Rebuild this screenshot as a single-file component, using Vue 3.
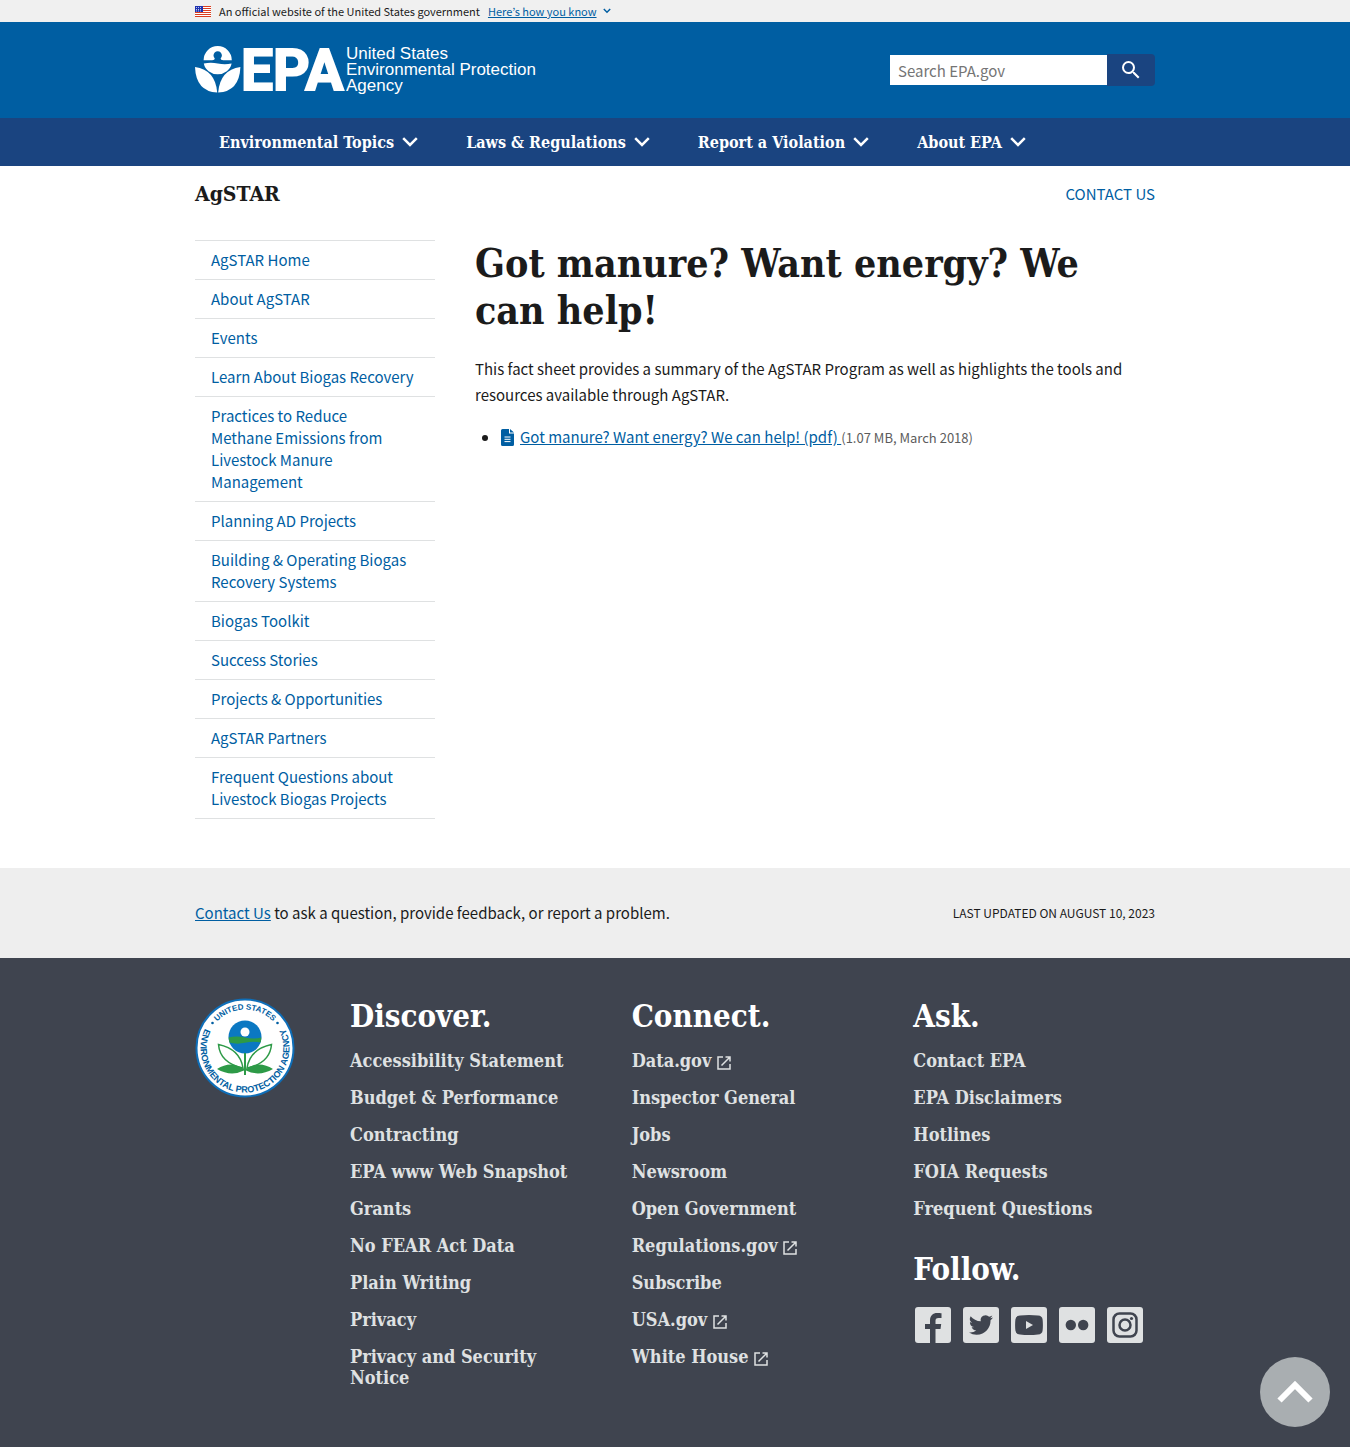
<script setup>
const topics = ['Environmental Topics', 'Laws & Regulations', 'Report a Violation', 'About EPA']

const sideLinks = [
  'AgSTAR Home',
  'About AgSTAR',
  'Events',
  'Learn About Biogas Recovery',
  'Practices to Reduce\nMethane Emissions from\nLivestock Manure\nManagement',
  'Planning AD Projects',
  'Building & Operating Biogas Recovery Systems',
  'Biogas Toolkit',
  'Success Stories',
  'Projects & Opportunities',
  'AgSTAR Partners',
  'Frequent Questions about Livestock Biogas Projects',
]

const discover = [
  'Accessibility Statement',
  'Budget & Performance',
  'Contracting',
  'EPA www Web Snapshot',
  'Grants',
  'No FEAR Act Data',
  'Plain Writing',
  'Privacy',
  'Privacy and Security Notice',
]

const connect = [
  { label: 'Data.gov', external: true },
  { label: 'Inspector General' },
  { label: 'Jobs' },
  { label: 'Newsroom' },
  { label: 'Open Government' },
  { label: 'Regulations.gov', external: true },
  { label: 'Subscribe' },
  { label: 'USA.gov', external: true },
  { label: 'White House', external: true },
]

const ask = ['Contact EPA', 'EPA Disclaimers', 'Hotlines', 'FOIA Requests', 'Frequent Questions']
</script>

<template>
  <div class="page">
    <section class="banner" aria-label="Official government website">
      <div class="container banner-inner">
        <svg class="flag" viewBox="0 0 16 11" aria-hidden="true">
          <rect width="16" height="11" fill="#fff" />
          <path d="M0 .5h16M0 2.5h16M0 4.5h16M0 6.5h16M0 8.5h16M0 10.5h16" stroke="#db3e1f" />
          <rect width="8" height="6" fill="#1e33b1" />
          <path d="M1 1.5h6M1 3.5h6M1 5h6" stroke="#fff" stroke-width=".7" stroke-dasharray="1 1" />
        </svg>
        <span>An official website of the United States government</span>
        <button type="button" class="banner-button">
          <span>Here’s how you know</span>
          <svg viewBox="0 0 8 6" aria-hidden="true"><path d="M.8 1 4 4.2 7.2 1" /></svg>
        </button>
      </div>
    </section>

    <header class="header">
      <div class="container header-inner">
        <a href="#" class="logo" aria-label="US EPA home">
          <svg viewBox="0 0 350 48" role="img">
            <g fill="#fff">
              <path d="M8.6 14.2a14.1 14.1 0 0 1 28.2 0h-8.600q-2.600-.3-2.600-1.800a4.200 4.200 0 1 0-5.800 0q0 1.500-2.600 1.800z" />
              <path d="M8.800 17.500q7-1.500 14 0t13.800 0a14.100 13 0 0 1-27.800 0z" />
              <path d="M0 21q20.500 3 22.200 25.500Q1 45.500 0 21z" />
              <path d="M45.400 21q-20.500 3-22.200 25.500Q44.400 45.500 45.400 21z" />
            </g>
            <text class="logo-mark" x="46" y="44">EPA</text>
            <text class="logo-name" x="151" y="13">United States</text>
            <text class="logo-name" x="151" y="29">Environmental Protection</text>
            <text class="logo-name" x="151" y="45">Agency</text>
          </svg>
        </a>
        <form class="search" role="search" @submit.prevent>
          <input type="search" aria-label="Search EPA.gov" placeholder="Search EPA.gov" />
          <button type="submit" aria-label="Search">
            <svg viewBox="0 0 24 24" aria-hidden="true">
              <path d="M15.500 14h-.79l-.28-.27A6.471 6.471 0 0 0 16 9.500 6.500 6.500 0 1 0 9.500 16c1.610 0 3.090-.59 4.230-1.570l.27.28v.79l5 4.990L20.490 19l-4.990-5zm-6 0C7.010 14 5 11.990 5 9.500S7.010 5 9.500 5 14 7.010 14 9.500 11.990 14 9.500 14z" />
            </svg>
          </button>
        </form>
      </div>
    </header>

    <nav class="topnav" aria-label="Primary">
      <div class="container topnav-inner">
        <button v-for="topic in topics" :key="topic" type="button">
          <span>{{ topic }}</span>
          <svg viewBox="0 0 16 10" aria-hidden="true"><path d="M1.200 1.200 8 8l6.800-6.800" /></svg>
        </button>
      </div>
    </nav>

    <div class="container body">
      <div class="section-head">
        <h2>AgSTAR</h2>
        <a href="#">CONTACT US</a>
      </div>
      <div class="columns">
        <nav class="sidenav" aria-label="AgSTAR">
          <ul>
            <li v-for="link in sideLinks" :key="link"><a href="#">{{ link }}</a></li>
          </ul>
        </nav>
        <main class="content">
          <h1>Got manure? Want energy? We can help!</h1>
          <p>
            This fact sheet provides a summary of the AgSTAR Program as well as highlights the tools and
            resources available through AgSTAR.
          </p>
          <ul>
            <li>
              <svg class="file" viewBox="0 0 13 17" aria-hidden="true">
                <path d="M1.500 0H8v4.500h5v11a1.500 1.500 0 0 1-1.500 1.500h-10A1.500 1.500 0 0 1 0 15.500v-14A1.500 1.500 0 0 1 1.500 0z" fill="#005ea2" />
                <path d="M9 0v3.500h4z" fill="#005ea2" />
                <path d="M3.500 8h6M3.500 10.300h6M3.500 12.600h6" stroke="#fff" />
              </svg>
              <a href="#">Got manure? Want energy? We can help! (pdf) </a><span class="meta">(1.07 MB, March 2018)</span>
            </li>
          </ul>
        </main>
      </div>
    </div>

    <section class="prefooter">
      <div class="container prefooter-inner">
        <p><a href="#">Contact Us</a> to ask a question, provide feedback, or report a problem.</p>
        <p class="updated">LAST UPDATED ON AUGUST 10, 2023</p>
      </div>
    </section>

    <footer class="footer">
      <div class="container footer-inner">
        <svg class="seal" viewBox="0 0 100 100" role="img" aria-label="EPA seal">
          <defs>
            <path id="seal-top" d="M11.500 50a38.500 38.500 0 0 1 77 0" />
            <path id="seal-bottom" d="M15.500 22A44.500 44.500 0 1 0 84.500 22" />
          </defs>
          <circle cx="50" cy="50" r="48.500" fill="#fff" stroke="#0e6eb8" stroke-width="2" />
          <text class="seal-small"><textPath href="#seal-top" startOffset="50%">UNITED STATES</textPath></text>
          <text><textPath href="#seal-bottom" startOffset="50%">ENVIRONMENTAL PROTECTION AGENCY</textPath></text>
          <circle cx="17.500" cy="25" r="1.300" fill="#005ea2" />
          <circle cx="82.500" cy="25" r="1.300" fill="#005ea2" />
          <circle cx="50" cy="39" r="16.500" fill="#0b78c2" />
          <path d="M33.600 39.500q8-2 16.400 0t16.400 0l-.7 5q-7.700-1.500-15.700.3t-15.700-.3z" fill="#2d9a47" />
          <circle cx="50" cy="34" r="4.500" fill="#fff" />
          <g fill="#fff" stroke="#2d9a47" stroke-width="1.500">
            <path d="M48 70Q25 65 23.500 46.500 45 51 48 70z" />
            <path d="M52 70Q75 65 76.500 46.500 55 51 52 70z" />
          </g>
          <path d="M22 71q14-9 27 0v-16h2v16q13-9 27 0-14 8-27 1.500V77h-2v-4.500Q36 79 22 71z" fill="#2d9a47" />
        </svg>

        <div class="footer-columns">
          <section>
            <h2>Discover.</h2>
            <ul>
              <li v-for="link in discover" :key="link"><a href="#">{{ link }}</a></li>
            </ul>
          </section>
          <section>
            <h2>Connect.</h2>
            <ul>
              <li v-for="link in connect" :key="link.label">
                <a href="#">{{ link.label }}
                  <svg v-if="link.external" class="external" viewBox="0 0 14 14" aria-hidden="true">
                    <path d="M6 1H1v12h12V8M8.500 1H13v4.500M13 1 4.500 9.500" />
                  </svg>
                </a>
              </li>
            </ul>
          </section>
          <section>
            <h2>Ask.</h2>
            <ul>
              <li v-for="link in ask" :key="link"><a href="#">{{ link }}</a></li>
            </ul>
            <h2 class="follow">Follow.</h2>
            <div class="social">
              <a href="#" aria-label="Facebook">
                <svg viewBox="0 0 36 36">
                  <rect width="36" height="36" rx="3" />
                  <path class="ink" d="M15 36V22h-5v-5h5v-3.500C15 8.500 18 6 22.200 6c1.800 0 3.600.2 4.300.3v4.600h-3c-2.300 0-3 1.100-3 2.800V17h5.700l-.7 5h-5v14z" />
                </svg>
              </a>
              <a href="#" aria-label="Twitter">
                <svg viewBox="0 0 36 36">
                  <rect width="36" height="36" rx="3" />
                  <path class="ink" transform="translate(6 6)" d="M23.950 4.570a10 10 0 0 1-2.820.77 4.960 4.960 0 0 0 2.160-2.720c-.95.550-2 .95-3.130 1.180a4.920 4.920 0 0 0-8.380 4.480C7.690 8.090 4.070 6.130 1.640 3.160a4.930 4.930 0 0 0 1.520 6.570 4.900 4.900 0 0 1-2.230-.61v.06a4.930 4.930 0 0 0 3.950 4.830 5 5 0 0 1-2.210.08 4.940 4.940 0 0 0 4.600 3.420A9.870 9.870 0 0 1 0 19.540a13.990 13.990 0 0 0 7.550 2.210c9.050 0 14-7.500 14-13.980 0-.21 0-.42-.02-.63a9.940 9.940 0 0 0 2.460-2.550z" />
                </svg>
              </a>
              <a href="#" aria-label="YouTube">
                <svg viewBox="0 0 36 36">
                  <rect width="36" height="36" rx="3" />
                  <path class="ink" d="M9 8.500Q18 7.500 27 8.500q4.200.3 4.600 4 .6 5.500 0 11-.4 3.700-4.600 4-9 1-18 0-4.200-.3-4.600-4-.6-5.500 0-11 .4-3.700 4.600-4z" />
                  <path d="m15 14 7 4-7 4z" />
                </svg>
              </a>
              <a href="#" aria-label="Flickr">
                <svg viewBox="0 0 36 36">
                  <rect width="36" height="36" rx="3" />
                  <circle class="ink" cx="11.800" cy="18" r="5.200" />
                  <circle class="ink" cx="24.200" cy="18" r="5.200" />
                </svg>
              </a>
              <a href="#" aria-label="Instagram">
                <svg viewBox="0 0 36 36">
                  <rect width="36" height="36" rx="3" />
                  <rect class="line" x="6.500" y="6.500" width="23" height="23" rx="6" />
                  <circle class="line" cx="18" cy="18" r="5.500" />
                  <circle class="ink" cx="24.500" cy="11.500" r="1.600" />
                </svg>
              </a>
            </div>
          </section>
        </div>
      </div>
    </footer>

    <button type="button" class="to-top" aria-label="Back to top">
      <svg viewBox="0 0 36 22" aria-hidden="true"><path d="M2.500 19.500 18 4l15.500 15.500" /></svg>
    </button>
  </div>
</template>

<style>
body {
  margin: 0;
}
</style>

<style scoped>
.page {
  --sans: "Noto Sans CJK KR", "Noto Sans", sans-serif;
  --serif: "DejaVu Serif Condensed", "DejaVu Serif", serif;
  display: flex;
  flex-direction: column;
  min-height: 100vh;
  background: #fff;
  color: #1b1b1b;
  font-family: var(--sans);
  font-size: 15px;
  line-height: 26px;
}

h1,
h2,
p,
ul {
  margin: 0;
}

ul {
  padding: 0;
}

a {
  color: #005ea2;
}

button {
  border: 0;
  padding: 0;
  font: inherit;
  cursor: pointer;
}

svg {
  display: block;
  flex: none;
}

.container {
  box-sizing: border-box;
  width: 100%;
  max-width: 992px;
  margin: 0 auto;
  padding: 0 16px;
}

.banner {
  background: #f0f0f0;
  font-size: 11px;
  line-height: 22px;
}

.banner-inner {
  display: flex;
  align-items: center;
  gap: 8px;
}

.flag {
  width: 16px;
  height: 11px;
}

.banner-button {
  display: flex;
  align-items: center;
  gap: 6px;
  background: none;
  color: #005ea2;
}

.banner-button span {
  text-decoration: underline;
}

.banner-button svg {
  width: 8px;
  height: 6px;
  fill: none;
  stroke: #005ea2;
  stroke-width: 1.5;
}

.header {
  background: #005ea2;
}

.header-inner {
  display: flex;
  justify-content: space-between;
  align-items: center;
  padding-top: 24px;
  padding-bottom: 24px;
}

.logo svg {
  width: 350px;
  height: 48px;
  overflow: visible;
  fill: #fff;
}

.logo-mark {
  font: bold 57px Roboto, sans-serif;
  stroke: #fff;
  stroke-width: 2;
}

.logo-name {
  font: 17px "Liberation Sans", Arial, sans-serif;
}

.search {
  display: flex;
}

.search input {
  box-sizing: border-box;
  width: 218px;
  height: 32px;
  margin: 0;
  padding: 0 8px;
  border: 1px solid #005ea2;
  border-right: 0;
  border-radius: 0;
  appearance: none;
  background: #fff;
  font-family: var(--sans);
  font-size: 15px;
}

.search input::placeholder {
  color: #757575;
}

.search button {
  display: flex;
  align-items: center;
  justify-content: center;
  width: 48px;
  height: 32px;
  border-radius: 0 4px 4px 0;
  background: #1a4480;
}

.search svg {
  width: 24px;
  height: 24px;
  fill: #fff;
}

.topnav {
  background: #1a4480;
}

.topnav-inner {
  display: flex;
}

.topnav button {
  display: flex;
  align-items: center;
  gap: 8px;
  height: 48px;
  padding: 0 24px;
  background: none;
  color: #fff;
  font: bold 16px var(--serif);
  white-space: nowrap;
}

.topnav svg {
  width: 16px;
  height: 10px;
  fill: none;
  stroke: #fff;
  stroke-width: 2.5;
}

.section-head {
  display: flex;
  justify-content: space-between;
  padding: 14px 0 32px;
  line-height: 28px;
}

.section-head h2 {
  font: bold 21px/28px var(--serif);
}

.section-head a {
  text-decoration: none;
}

.columns {
  display: grid;
  grid-template-columns: 240px 1fr;
  gap: 40px;
  padding-bottom: 49px;
}

.sidenav ul {
  border-bottom: 1px solid #dfe1e2;
  list-style: none;
}

.sidenav a {
  display: block;
  padding: 8px 16px;
  border-top: 1px solid #dfe1e2;
  line-height: 22px;
  text-decoration: none;
  white-space: pre-line;
}

.content h1 {
  margin-bottom: 22px;
  font: bold 39px/47px var(--serif);
}

.content ul {
  margin-top: 16px;
  padding-left: 25px;
}

.file {
  display: inline-block;
  width: 13px;
  height: 17px;
  margin: 0 6px 0 1px;
  vertical-align: -3px;
}

.meta {
  color: #5c5c5c;
  font-size: 13px;
}

.prefooter {
  background: #eee;
}

.prefooter-inner {
  display: flex;
  justify-content: space-between;
  padding-top: 32px;
  padding-bottom: 32px;
}

.updated {
  font-size: 12px;
}

.footer {
  flex: 1;
  background: #3f444f;
}

.footer-inner {
  display: flex;
  gap: 55px;
  padding-top: 40px;
  padding-bottom: 56px;
}

.seal {
  width: 100px;
  height: 100px;
}

.seal text {
  fill: #005ea2;
  font: bold 9px "Liberation Sans", Arial, sans-serif;
  text-anchor: middle;
}

.seal .seal-small {
  font-size: 8px;
}

.footer-columns {
  display: grid;
  flex: 1;
  grid-template-columns: repeat(3, 1fr);
  gap: 40px;
}

.footer h2 {
  margin-bottom: 16px;
  color: #fff;
  font: bold 31px/36px var(--serif);
}

.footer ul {
  display: grid;
  gap: 16px;
  list-style: none;
  font: bold 18px/21px var(--serif);
}

.footer a {
  color: #dfe1e2;
  text-decoration: none;
}

.external {
  display: inline-block;
  width: 14px;
  height: 14px;
  fill: none;
  stroke: #dfe1e2;
  stroke-width: 1.5;
  vertical-align: -3px;
}

.footer .follow {
  margin: 32px 0 20px;
}

.social {
  display: flex;
  gap: 12px;
  padding-left: 2px;
}

.social svg {
  width: 36px;
  height: 36px;
  fill: #dfe1e2;
}

.social .ink {
  fill: #3f444f;
}

.social .line {
  fill: none;
  stroke: #3f444f;
  stroke-width: 2.5;
}

.to-top {
  position: fixed;
  right: 20px;
  bottom: 20px;
  display: flex;
  align-items: center;
  justify-content: center;
  width: 70px;
  height: 70px;
  border-radius: 50%;
  background: #a9aeb1;
}

.to-top svg {
  width: 36px;
  height: 22px;
  fill: none;
  stroke: #fff;
  stroke-width: 6;
}
</style>
